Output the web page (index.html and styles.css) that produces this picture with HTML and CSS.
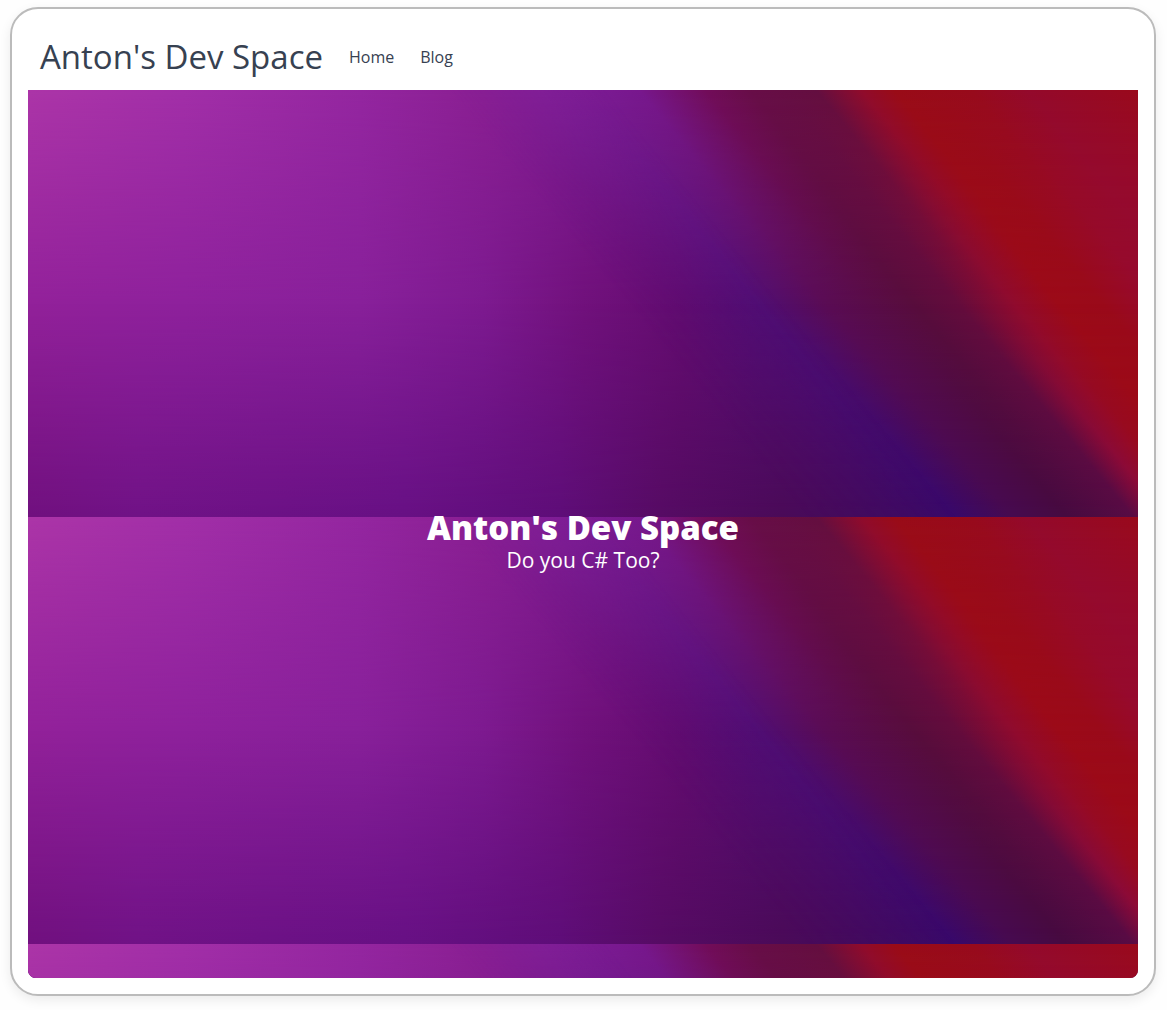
FILE: index.html
```html
<!DOCTYPE html>
<html lang="en">

<head>
    <meta charset="UTF-8">
    <meta name="viewport" content="width=device-width, initial-scale=1.0">
    <title>Anton's Dev Space</title>
    <link rel="stylesheet" href="styles.css">
</head>

<body>
    <div class="card">
        <header class="navbar">
            <a class="brand" href="#">Anton's Dev Space</a>
            <nav class="nav-links">
                <a href="#">Home</a>
                <a href="#">Blog</a>
            </nav>
        </header>

        <main class="hero">
            <div class="wallpaper" aria-hidden="true">
                <svg class="tile" viewBox="0 0 1110 427">
                    <defs>
                        <!-- purple side: top, middle and bottom rows -->
                        <linearGradient id="leftTop" gradientUnits="userSpaceOnUse" x1="0" x2="1110">
                            <stop offset="0" stop-color="#ac35a8" />
                            <stop offset="0.14" stop-color="#a22fa8" />
                            <stop offset="0.3" stop-color="#9426a0" />
                            <stop offset="0.41" stop-color="#8a1f92" />
                            <stop offset="0.5" stop-color="#7e1c92" />
                            <stop offset="0.57" stop-color="#78168a" />
                        </linearGradient>
                        <linearGradient id="leftMid" gradientUnits="userSpaceOnUse" x1="0" x2="1110">
                            <stop offset="0" stop-color="#92219a" />
                            <stop offset="0.14" stop-color="#8e219c" />
                            <stop offset="0.3" stop-color="#88209a" />
                            <stop offset="0.41" stop-color="#7d1a90" />
                            <stop offset="0.5" stop-color="#71117c" />
                            <stop offset="0.59" stop-color="#640c70" />
                            <stop offset="0.66" stop-color="#560e74" />
                        </linearGradient>
                        <linearGradient id="leftLow" gradientUnits="userSpaceOnUse" x1="0" x2="1110">
                            <stop offset="0" stop-color="#70107e" />
                            <stop offset="0.1" stop-color="#701286" />
                            <stop offset="0.34" stop-color="#671084" />
                            <stop offset="0.48" stop-color="#5e0d78" />
                            <stop offset="0.57" stop-color="#560b64" />
                            <stop offset="0.68" stop-color="#4a0a58" />
                            <stop offset="0.78" stop-color="#400a60" />
                        </linearGradient>

                        <!-- slanted bands -->
                        <linearGradient id="bandTop" gradientUnits="userSpaceOnUse" x1="0" x2="1110" gradientTransform="skewX(39.4)">
                            <stop offset="0.46" stop-color="#80209a" />
                            <stop offset="0.55" stop-color="#78188e" />
                            <stop offset="0.61" stop-color="#720d5a" />
                            <stop offset="0.65" stop-color="#680e48" />
                            <stop offset="0.71" stop-color="#640f40" />
                            <stop offset="0.75" stop-color="#900c2c" />
                            <stop offset="0.78" stop-color="#9a0c18" />
                            <stop offset="0.85" stop-color="#980b1c" />
                            <stop offset="0.9" stop-color="#940a2c" />
                            <stop offset="1" stop-color="#9a0a1c" />
                        </linearGradient>
                        <linearGradient id="bandMid" gradientUnits="userSpaceOnUse" x1="0" x2="1110" gradientTransform="skewX(39.4)">
                            <stop offset="0.42" stop-color="#580c72" />
                            <stop offset="0.5" stop-color="#500e74" />
                            <stop offset="0.56" stop-color="#5a0c54" />
                            <stop offset="0.64" stop-color="#580d3c" />
                            <stop offset="0.68" stop-color="#640c3c" />
                            <stop offset="0.73" stop-color="#900b2e" />
                            <stop offset="0.77" stop-color="#9c0a18" />
                            <stop offset="0.81" stop-color="#9a0a1a" />
                            <stop offset="0.86" stop-color="#960a30" />
                            <stop offset="1" stop-color="#960a30" />
                        </linearGradient>
                        <linearGradient id="bandLow" gradientUnits="userSpaceOnUse" x1="0" x2="1110" gradientTransform="skewX(39.4)">
                            <stop offset="0.38" stop-color="#480a56" />
                            <stop offset="0.46" stop-color="#400a62" />
                            <stop offset="0.52" stop-color="#38086a" />
                            <stop offset="0.57" stop-color="#460a50" />
                            <stop offset="0.62" stop-color="#460a40" />
                            <stop offset="0.68" stop-color="#580b44" />
                            <stop offset="0.71" stop-color="#900a38" />
                            <stop offset="0.74" stop-color="#9c0a18" />
                        </linearGradient>

                        <linearGradient id="fadeMid" x2="0" y2="1">
                            <stop offset="0" stop-color="#000" />
                            <stop offset="0.5" stop-color="#fff" />
                        </linearGradient>
                        <linearGradient id="fadeLow" x2="0" y2="1">
                            <stop offset="0.5" stop-color="#000" />
                            <stop offset="1" stop-color="#fff" />
                        </linearGradient>
                        <linearGradient id="fadeLeft" gradientUnits="userSpaceOnUse" x1="0" x2="1110" gradientTransform="skewX(39.4)">
                            <stop offset="0.38" stop-color="#fff" />
                            <stop offset="0.52" stop-color="#000" />
                        </linearGradient>
                        <mask id="maskMid">
                            <rect width="1110" height="427" fill="url(#fadeMid)" />
                        </mask>
                        <mask id="maskLow">
                            <rect width="1110" height="427" fill="url(#fadeLow)" />
                        </mask>
                        <mask id="maskLeft">
                            <rect width="1110" height="427" fill="url(#fadeLeft)" />
                        </mask>

                        <g id="wall">
                            <rect width="1110" height="427" fill="url(#bandTop)" />
                            <rect width="1110" height="427" fill="url(#bandMid)" mask="url(#maskMid)" />
                            <rect width="1110" height="427" fill="url(#bandLow)" mask="url(#maskLow)" />
                            <g mask="url(#maskLeft)">
                                <rect width="1110" height="427" fill="url(#leftTop)" />
                                <rect width="1110" height="427" fill="url(#leftMid)" mask="url(#maskMid)" />
                                <rect width="1110" height="427" fill="url(#leftLow)" mask="url(#maskLow)" />
                            </g>
                        </g>
                    </defs>
                    <use href="#wall" />
                </svg>
                <svg class="tile" viewBox="0 0 1110 427"><use href="#wall" /></svg>
                <svg class="tile" viewBox="0 0 1110 427"><use href="#wall" /></svg>
            </div>

            <div class="hero-text">
                <h1>Anton's Dev Space</h1>
                <p>Do you C# Too?</p>
            </div>
        </main>
    </div>
</body>

</html>
```
FILE: styles.css
```css
/* General Styles */
* {
    box-sizing: border-box;
}

body {
    font-family: "Segoe UI", "Open Sans", "Noto Sans", sans-serif;
    margin: 0;
    padding: 7px 11px 14px 10px;
    min-height: 100vh;
    display: flex;
    background-color: #fefefe;
    color: #374151;
}

.card {
    flex: 1;
    display: flex;
    flex-direction: column;
    padding: 16px;
    background-color: white;
    border: 2px solid #bbb;
    border-radius: 28px;
    box-shadow: 0 4px 12px rgba(0, 0, 0, 0.08);
}

/* Navigation */
.navbar {
    display: flex;
    align-items: center;
    gap: 26px;
    height: 65px;
    padding: 0 12px 2px;
}

.navbar a {
    color: #374151;
    text-decoration: none;
}

.brand {
    font-size: 33px;
}

.nav-links {
    display: flex;
    gap: 26px;
    font-size: 16px;
}

/* Hero */
.hero {
    position: relative;
    flex: 1;
    display: flex;
    align-items: center;
    justify-content: center;
    padding-top: 16px;
    overflow: hidden;
    border-radius: 0 0 8px 8px;
}

.wallpaper {
    position: absolute;
    inset: 0;
    overflow: hidden;
    background-color: #600d60;
}

.tile {
    display: block;
    width: 100%;
}

.hero-text {
    position: relative;
    color: white;
    text-align: center;
}

.hero-text h1 {
    margin: 0;
    font-size: 33px;
    font-weight: 800;
    line-height: 36px;
}

.hero-text p {
    margin: 0;
    font-size: 21px;
    line-height: 28px;
}
```
